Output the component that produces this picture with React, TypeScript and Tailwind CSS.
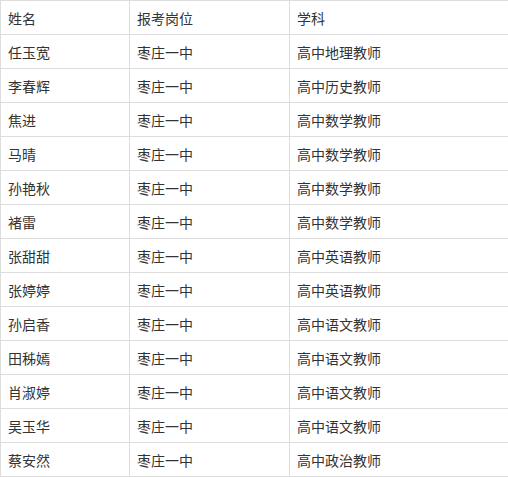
import React from 'react';

const ROWS: [string, string, string][] = [
  ['任玉宽', '枣庄一中', '高中地理教师'],
  ['李春辉', '枣庄一中', '高中历史教师'],
  ['焦进', '枣庄一中', '高中数学教师'],
  ['马晴', '枣庄一中', '高中数学教师'],
  ['孙艳秋', '枣庄一中', '高中数学教师'],
  ['褚雷', '枣庄一中', '高中数学教师'],
  ['张甜甜', '枣庄一中', '高中英语教师'],
  ['张婷婷', '枣庄一中', '高中英语教师'],
  ['孙启香', '枣庄一中', '高中语文教师'],
  ['田秭嫣', '枣庄一中', '高中语文教师'],
  ['肖淑婷', '枣庄一中', '高中语文教师'],
  ['吴玉华', '枣庄一中', '高中语文教师'],
  ['蔡安然', '枣庄一中', '高中政治教师'],
];

const cell = 'border border-[#dddddd] h-[34px] py-0 pl-[7px] pr-2 text-left align-middle font-normal';

export default function App() {
  return (
    <div className="bg-white text-[#333333] text-[14px] leading-[20px]" style={{ fontFamily: '"Noto Sans CJK SC", "Noto Sans", sans-serif' }}>
      <table className="border-collapse w-[508px] table-fixed">
        <colgroup>
          <col className="w-[129px]" />
          <col className="w-[160px]" />
          <col className="w-[219px]" />
        </colgroup>
        <thead>
          <tr>
            <th className={cell}>姓名</th>
            <th className={cell}>报考岗位</th>
            <th className={cell}>学科</th>
          </tr>
        </thead>
        <tbody>
          {ROWS.map(([name, post, subject]) => (
            <tr key={name}>
              <td className={cell}>{name}</td>
              <td className={cell}>{post}</td>
              <td className={cell}>{subject}</td>
            </tr>
          ))}
        </tbody>
      </table>
    </div>
  );
}
